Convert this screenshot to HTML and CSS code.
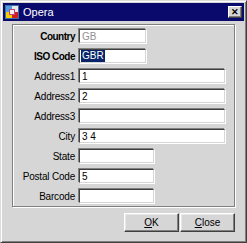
FILE: index.html
```html
<!DOCTYPE html>
<html lang="en">
<head>
    <meta charset="UTF-8">
    <title>Opera</title>
    <link rel="stylesheet" href="styles.css">
</head>
<body>
    <div class="window">
        <div class="titlebar">
            <svg class="app-icon" width="14" height="14" viewBox="0 0 14 14">
                <rect x="0" y="0" width="14" height="14" fill="#3a6ea5"/>
                <rect x="1" y="1" width="6" height="6" fill="#4fa0e0"/>
                <rect x="7" y="1" width="6" height="6" fill="#e8e8e8"/>
                <rect x="1" y="7" width="6" height="6" fill="#f0d000"/>
                <rect x="7" y="7" width="6" height="6" fill="#d02020"/>
                <rect x="4" y="4" width="6" height="6" fill="#c04080"/>
                <rect x="5" y="5" width="4" height="4" fill="#f0f0f0"/>
            </svg>
            <span class="title">Opera</span>
            <button class="close-x">&#x2715;</button>
        </div>

        <div class="panel">
            <div class="row">
                <label class="bold">Country</label>
                <input type="text" class="short disabled" value="GB" disabled>
            </div>
            <div class="row">
                <label class="bold">ISO Code</label>
                <div class="field short"><span class="selected">GBR</span></div>
            </div>
            <div class="row">
                <label>Address1</label>
                <input type="text" class="long" value="1">
            </div>
            <div class="row">
                <label>Address2</label>
                <input type="text" class="long" value="2">
            </div>
            <div class="row">
                <label>Address3</label>
                <input type="text" class="long" value="">
            </div>
            <div class="row">
                <label>City</label>
                <input type="text" class="long" value="3 4">
            </div>
            <div class="row">
                <label>State</label>
                <input type="text" class="mid" value="">
            </div>
            <div class="row">
                <label>Postal Code</label>
                <input type="text" class="mid" value="5">
            </div>
            <div class="row">
                <label>Barcode</label>
                <input type="text" class="mid" value="">
            </div>
        </div>

        <div class="buttons">
            <button class="btn"><u>O</u>K</button>
            <button class="btn"><u>C</u>lose</button>
        </div>
    </div>
</body>
</html>
```

FILE: styles.css
```css
body {
    margin: 0;
    font-family: "Liberation Sans", Arial, sans-serif;
    font-size: 10px;
    background: #d4d0c8;
}
.window {
    width: 247px;
    height: 243px;
    box-sizing: border-box;
    background: #d6d6d6;
    border: 1px solid;
    border-color: #dcdcdc #404040 #404040 #dcdcdc;
    box-shadow: inset 1px 1px 0 #fff, inset -1px -1px 0 #808080;
    padding: 2px;
}
.titlebar {
    height: 18px;
    background: #0a0a6c;
    display: flex;
    align-items: center;
    padding: 0 2px 0 2px;
}
.app-icon {
    margin-right: 4px;
}
.title {
    color: white;
    font-size: 11px;
    flex: 1;
}
.close-x {
    width: 14px;
    height: 12px;
    padding: 0;
    font-size: 9px;
    font-weight: bold;
    line-height: 10px;
    color: #000;
    background: #d6d6d6;
    border: 1px solid;
    border-color: #fff #404040 #404040 #fff;
    box-shadow: inset -1px -1px 0 #808080;
}
.panel {
    margin: 3px 9px 0 9px;
    height: 183px;
    box-sizing: border-box;
    border: 1px solid #808080;
    box-shadow: inset 1px 1px 0 #fff, 1px 1px 0 #fff;
    padding-top: 4px;
    display: flex;
    flex-direction: column;
    gap: 6px;
}
.row {
    display: flex;
    align-items: center;
    height: 14px;
}
label {
    width: 62px;
    text-align: right;
    margin-right: 4px;
    color: #000;
    letter-spacing: -0.2px;
}
label.bold {
    font-weight: bold;
    letter-spacing: -0.5px;
}
input, .field {
    height: 14px;
    box-sizing: border-box;
    margin: 0;
    padding: 0 0 0 2px;
    font-family: "Liberation Sans", Arial, sans-serif;
    font-size: 10px;
    background: #fff;
    color: #000;
    border: 1px solid;
    border-color: #404040 #d6d6d6 #d6d6d6 #404040;
    box-shadow: -1px -1px 0 #808080, 1px 1px 0 #fff;
    outline: none;
}
.field {
    display: flex;
    align-items: center;
    padding-left: 1px;
}
.short {
    width: 67px;
}
.mid {
    width: 75px;
}
.long {
    width: 146px;
}
input.disabled {
    color: #909090;
    background: #fff;
}
.selected {
    background: #0a246a;
    color: #fff;
    padding: 0 1px;
    line-height: 12px;
}
.buttons {
    display: flex;
    justify-content: flex-end;
    gap: 1px;
    margin: 6px 9px 0 0;
}
.btn {
    width: 55px;
    height: 19px;
    padding: 0;
    font-family: "Liberation Sans", Arial, sans-serif;
    font-size: 10px;
    color: #000;
    background: #d6d6d6;
    border: 1px solid;
    border-color: #fff #404040 #404040 #fff;
    box-shadow: inset -1px -1px 0 #808080, inset 1px 1px 0 #e8e8e8;
}
```
